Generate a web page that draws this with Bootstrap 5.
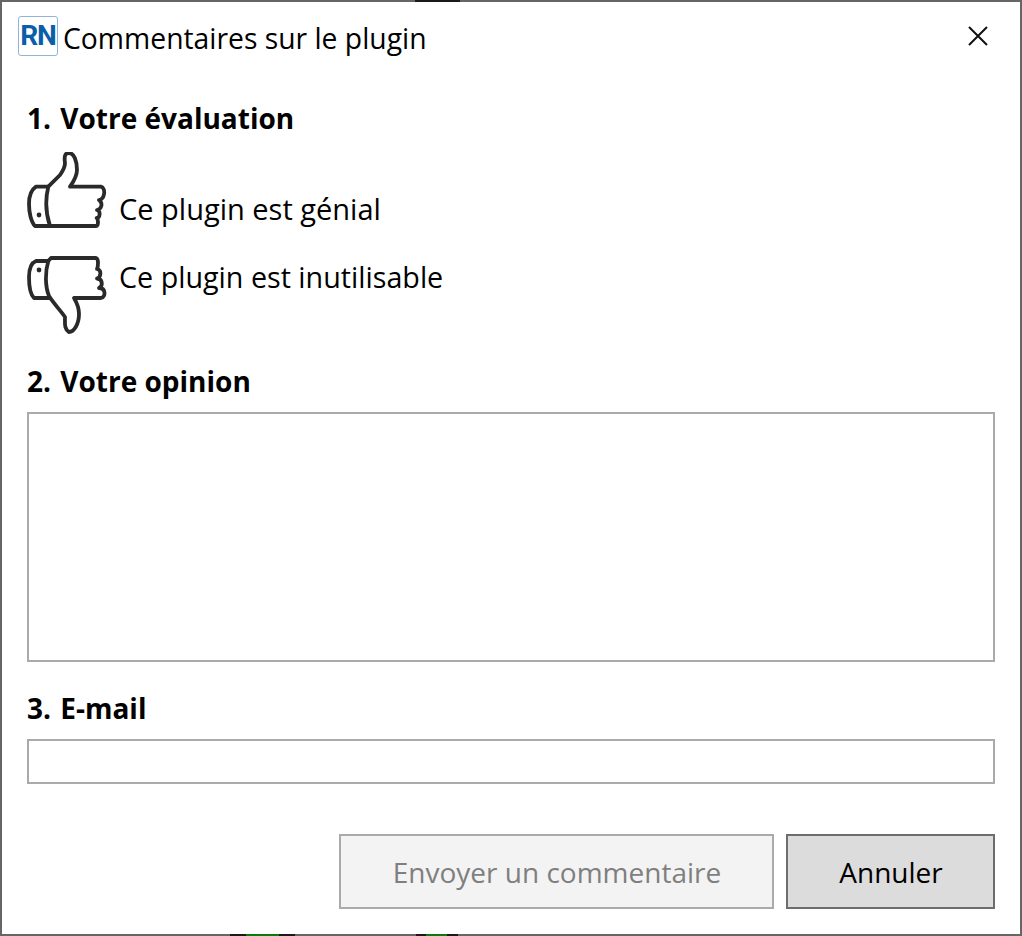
<!DOCTYPE html>
<html lang="fr">
<head>
  <meta charset="UTF-8" />
  <meta name="viewport" content="width=device-width, initial-scale=1.0">
  <title>Commentaires sur le plugin</title>
  <link href="https://cdn.jsdelivr.net/npm/bootstrap@5.3.3/dist/css/bootstrap.min.css" rel="stylesheet">
  <style>
    html, body { height: 100%; }
    body { background: #fff; color: #000; font-family: "Open Sans", "Noto Sans", sans-serif; overflow: hidden; }
    .fenetre { height: 936px; border: 2px solid #666; background: #fff; }
    .entete { height: 98px; padding: 14px 0 0 16px; }
    .logo-rn { width: 40px; height: 40px; border: 1px solid #8fb4d8; border-radius: 3px; color: #0a5fa8; font-family: Roboto, sans-serif; font-weight: 700; font-size: 28px; letter-spacing: -1px; line-height: 1; }
    .titre { font-size: 28.3px; line-height: 44px; margin-left: 5px; }
    .fermer { width: 28px; height: 28px; margin: 6px 28px 0 0; background: none; border: 0; padding: 0; }
    .contenu { padding: 0 25px; }
    .rubrique { font-size: 28px; font-weight: 700; line-height: 36px; margin: 0; }
    .numero { margin-right: 2px; }
    .choix { line-height: 38px; }
    .choix-haut { font-size: 29px; height: 78px; margin-top: 18px; }
    .choix-haut label { margin-bottom: 4px; }
    .choix-bas { font-size: 28.7px; height: 78px; margin-top: 22px; }
    .choix-bas label { margin-top: 4px; }
    .pouce { fill: none; stroke: #2a2a2a; stroke-width: 3.8; stroke-linejoin: round; }
    .champ-texte, .champ-texte:focus { border: 2px solid #aaa; border-radius: 0; box-shadow: none; resize: none; }
    .zone-avis { height: 250px; margin-top: 13px; }
    .zone-mail { height: 45px; margin-top: 13px; }
    .rubrique-avis { margin-top: 31px; }
    .rubrique-mail { margin-top: 28px; }
    .bouton { height: 75px; border-radius: 0; font-size: 28px; padding: 0 0 0 1px; }
    .bouton-envoi:disabled { width: 435px; background: #f3f3f3; border: 2px solid #aaa; color: #7f7f7f; opacity: 1; }
    .bouton-annuler { width: 209px; background: #dcdcdc; border: 2px solid #6d6d6d; color: #000; }
    .bas-form { margin-top: 50px; gap: 12px; }
    .trace { position: absolute; height: 2px; background: #1a1a1a; }
    .trace-verte { background: linear-gradient(90deg, #1a1a1a 25%, #0e7a0e 25%, #0e7a0e 75%, #1a1a1a 75%); }
  </style>
</head>
<body>
  <div class="trace" style="left:415px;top:0;width:45px"></div>
  <div class="trace trace-verte" style="left:230px;top:934px;width:65px;z-index:2"></div>
  <div class="trace trace-verte" style="left:416px;top:934px;width:42px;z-index:2"></div>

  <div class="fenetre d-flex flex-column">
    <div class="entete d-flex align-items-start">
      <div class="logo-rn d-flex align-items-center justify-content-center">RN</div>
      <div class="titre flex-grow-1">Commentaires sur le plugin</div>
      <button class="fermer" type="button" aria-label="Fermer">
        <svg width="28" height="28" viewBox="0 0 28 28"><path d="M5 5 L23 23 M23 5 L5 23" stroke="#111" stroke-width="2" fill="none"/></svg>
      </button>
    </div>

    <form class="contenu">
      <h2 class="rubrique"><span class="numero">1.</span> Votre évaluation</h2>

      <div class="choix choix-haut d-flex align-items-end gap-2">
        <svg width="80" height="80" viewBox="0 0 80 80" class="pouce flex-shrink-0">
          <path d="M21.300 34.700 H9 C4 38 2 45 2 52 C2 60 4 70 8 74 H23"/>
          <path d="M21.300 34.700 C18 48 19 62 23 74 H69 C72 74 71 67 69.700 66 C73 66 74 59 70 58 C75 57 76 51 72 48 C78 47 79 36 74 34.700 H43 C47 29 50 24 50 18 C50 9 47 1 42 1 C38 1 37 4 38 11 C38 16 35 20 33 23 Z"/>
          <circle cx="12" cy="63" r="2.400" fill="#2a2a2a" stroke="none"/>
        </svg>
        <label class="ms-1">Ce plugin est génial</label>
      </div>

      <div class="choix choix-bas d-flex align-items-start gap-2">
        <svg width="80" height="80" viewBox="0 0 80 80" class="pouce flex-shrink-0">
          <path d="M21.300 7 H9 C4 9 2 16 2 23 C2 31 3 40 7 44 H23"/>
          <path d="M21.300 7 C18 18 18 32 22 42 C27 50 34 57 38 63 C38 69 37 75 42 78 C47 78 52 70 52 60 C52 54 50 49 47 44 H74 C79 43 79 34 72 34 C76 32 76 25 70 24.500 C74 23 75 16 70 15 C71 13 72 5 69 4 H24 Z"/>
          <circle cx="12" cy="16" r="2.400" fill="#2a2a2a" stroke="none"/>
        </svg>
        <label class="ms-1">Ce plugin est inutilisable</label>
      </div>

      <h2 class="rubrique rubrique-avis"><span class="numero">2.</span> Votre opinion</h2>
      <textarea class="form-control champ-texte zone-avis"></textarea>

      <h2 class="rubrique rubrique-mail"><span class="numero">3.</span> E-mail</h2>
      <input type="text" class="form-control champ-texte zone-mail" />

      <div class="bas-form d-flex justify-content-end">
        <button type="button" class="btn bouton bouton-envoi" disabled>Envoyer un commentaire</button>
        <button type="button" class="btn bouton bouton-annuler">Annuler</button>
      </div>
    </form>
  </div>

<script src="https://cdn.jsdelivr.net/npm/bootstrap@5.3.3/dist/js/bootstrap.bundle.min.js"></script>
</body>
</html>
